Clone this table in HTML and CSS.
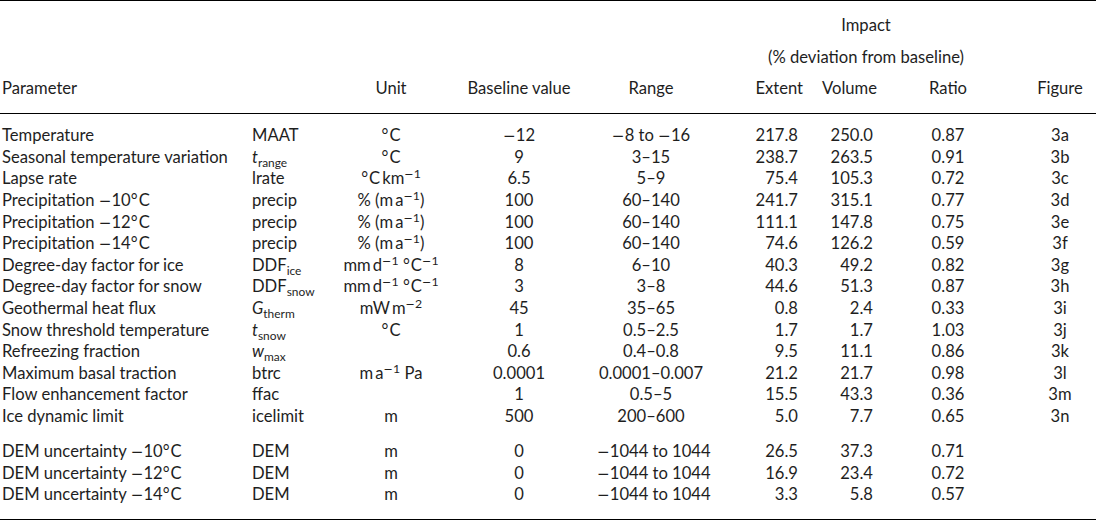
FILE: index.html
```html
<!DOCTYPE html>
<html lang="en">
<head>
<meta charset="utf-8">
<title>Parameter sensitivity</title>
<link rel="stylesheet" href="styles.css">
</head>
<body>
<div class="table">
  <div class="head">
    <div class="row hrow r1">
      <div class="span-impact">Impact</div>
    </div>
    <div class="row hrow r2">
      <div class="span-impact">(% deviation from baseline)</div>
    </div>
    <div class="row hrow r3">
      <div class="c-param">Parameter</div>
      <div class="c-sym"></div>
      <div class="c-unit">Unit</div>
      <div class="c-base">Baseline value</div>
      <div class="c-range">Range</div>
      <div class="c-ext h">Extent</div>
      <div class="c-vol h">Volume</div>
      <div class="c-ratio">Ratio</div>
      <div class="c-fig">Figure</div>
    </div>
  </div>
  <div class="body">
    <div class="group">
      <div class="row"><div class="c-param">Temperature</div><div class="c-sym">MAAT</div><div class="c-unit">°&#8202;C</div><div class="c-base"><span class="mn">−</span>12</div><div class="c-range"><span class="mn">−</span>8 to <span class="mn">−</span>16</div><div class="c-ext">217.8</div><div class="c-vol">250.0</div><div class="c-ratio">0.87</div><div class="c-fig">3a</div></div>
      <div class="row"><div class="c-param">Seasonal temperature variation</div><div class="c-sym"><i>t</i><sub>range</sub></div><div class="c-unit">°&#8202;C</div><div class="c-base">9</div><div class="c-range">3–15</div><div class="c-ext">238.7</div><div class="c-vol">263.5</div><div class="c-ratio">0.91</div><div class="c-fig">3b</div></div>
      <div class="row"><div class="c-param">Lapse rate</div><div class="c-sym">lrate</div><div class="c-unit">°&#8202;C&#8201;km<sup><span class="mn">−</span>1</sup></div><div class="c-base">6.5</div><div class="c-range">5–9</div><div class="c-ext">75.4</div><div class="c-vol">105.3</div><div class="c-ratio">0.72</div><div class="c-fig">3c</div></div>
      <div class="row"><div class="c-param">Precipitation <span class="mn">−</span>10°&#8202;C</div><div class="c-sym">precip</div><div class="c-unit">% (m&#8201;a<sup><span class="mn">−</span>1</sup>)</div><div class="c-base">100</div><div class="c-range">60–140</div><div class="c-ext">241.7</div><div class="c-vol">315.1</div><div class="c-ratio">0.77</div><div class="c-fig">3d</div></div>
      <div class="row"><div class="c-param">Precipitation <span class="mn">−</span>12°&#8202;C</div><div class="c-sym">precip</div><div class="c-unit">% (m&#8201;a<sup><span class="mn">−</span>1</sup>)</div><div class="c-base">100</div><div class="c-range">60–140</div><div class="c-ext">111.1</div><div class="c-vol">147.8</div><div class="c-ratio">0.75</div><div class="c-fig">3e</div></div>
      <div class="row"><div class="c-param">Precipitation <span class="mn">−</span>14°&#8202;C</div><div class="c-sym">precip</div><div class="c-unit">% (m&#8201;a<sup><span class="mn">−</span>1</sup>)</div><div class="c-base">100</div><div class="c-range">60–140</div><div class="c-ext">74.6</div><div class="c-vol">126.2</div><div class="c-ratio">0.59</div><div class="c-fig">3f</div></div>
      <div class="row"><div class="c-param">Degree-day factor for ice</div><div class="c-sym">DDF<sub>ice</sub></div><div class="c-unit">mm&#8201;d<sup><span class="mn">−</span>1</sup> °&#8202;C<sup><span class="mn">−</span>1</sup></div><div class="c-base">8</div><div class="c-range">6–10</div><div class="c-ext">40.3</div><div class="c-vol">49.2</div><div class="c-ratio">0.82</div><div class="c-fig">3g</div></div>
      <div class="row"><div class="c-param">Degree-day factor for snow</div><div class="c-sym">DDF<sub>snow</sub></div><div class="c-unit">mm&#8201;d<sup><span class="mn">−</span>1</sup> °&#8202;C<sup><span class="mn">−</span>1</sup></div><div class="c-base">3</div><div class="c-range">3–8</div><div class="c-ext">44.6</div><div class="c-vol">51.3</div><div class="c-ratio">0.87</div><div class="c-fig">3h</div></div>
      <div class="row"><div class="c-param">Geothermal heat flux</div><div class="c-sym"><i>G</i><sub>therm</sub></div><div class="c-unit">mW&#8201;m<sup><span class="mn">−</span>2</sup></div><div class="c-base">45</div><div class="c-range">35–65</div><div class="c-ext">0.8</div><div class="c-vol">2.4</div><div class="c-ratio">0.33</div><div class="c-fig">3i</div></div>
      <div class="row"><div class="c-param">Snow threshold temperature</div><div class="c-sym"><i>t</i><sub>snow</sub></div><div class="c-unit">°&#8202;C</div><div class="c-base">1</div><div class="c-range">0.5–2.5</div><div class="c-ext">1.7</div><div class="c-vol">1.7</div><div class="c-ratio">1.03</div><div class="c-fig">3j</div></div>
      <div class="row"><div class="c-param">Refreezing fraction</div><div class="c-sym"><i>w</i><sub>max</sub></div><div class="c-unit"></div><div class="c-base">0.6</div><div class="c-range">0.4–0.8</div><div class="c-ext">9.5</div><div class="c-vol">11.1</div><div class="c-ratio">0.86</div><div class="c-fig">3k</div></div>
      <div class="row"><div class="c-param">Maximum basal traction</div><div class="c-sym">btrc</div><div class="c-unit">m&#8201;a<sup><span class="mn">−</span>1</sup> Pa</div><div class="c-base">0.0001</div><div class="c-range">0.0001–0.007</div><div class="c-ext">21.2</div><div class="c-vol">21.7</div><div class="c-ratio">0.98</div><div class="c-fig">3l</div></div>
      <div class="row"><div class="c-param">Flow enhancement factor</div><div class="c-sym">ffac</div><div class="c-unit"></div><div class="c-base">1</div><div class="c-range">0.5–5</div><div class="c-ext">15.5</div><div class="c-vol">43.3</div><div class="c-ratio">0.36</div><div class="c-fig">3m</div></div>
      <div class="row"><div class="c-param">Ice dynamic limit</div><div class="c-sym">icelimit</div><div class="c-unit">m</div><div class="c-base">500</div><div class="c-range">200–600</div><div class="c-ext">5.0</div><div class="c-vol">7.7</div><div class="c-ratio">0.65</div><div class="c-fig">3n</div></div>
    </div>
    <div class="group dem">
      <div class="row"><div class="c-param">DEM uncertainty <span class="mn">−</span>10°&#8202;C</div><div class="c-sym">DEM</div><div class="c-unit">m</div><div class="c-base">0</div><div class="c-range"><span class="mn">−</span>1044 to 1044</div><div class="c-ext">26.5</div><div class="c-vol">37.3</div><div class="c-ratio">0.71</div><div class="c-fig"></div></div>
      <div class="row"><div class="c-param">DEM uncertainty <span class="mn">−</span>12°&#8202;C</div><div class="c-sym">DEM</div><div class="c-unit">m</div><div class="c-base">0</div><div class="c-range"><span class="mn">−</span>1044 to 1044</div><div class="c-ext">16.9</div><div class="c-vol">23.4</div><div class="c-ratio">0.72</div><div class="c-fig"></div></div>
      <div class="row"><div class="c-param">DEM uncertainty <span class="mn">−</span>14°&#8202;C</div><div class="c-sym">DEM</div><div class="c-unit">m</div><div class="c-base">0</div><div class="c-range"><span class="mn">−</span>1044 to 1044</div><div class="c-ext">3.3</div><div class="c-vol">5.8</div><div class="c-ratio">0.57</div><div class="c-fig"></div></div>
    </div>
  </div>
</div>
</body>
</html>
```

FILE: styles.css
```css
html, body {
  margin: 0;
  padding: 0;
  background: #ffffff;
}

body {
  font-family: Lato, "Liberation Sans", sans-serif;
  font-size: 16.6px;
  color: #1e1e1e;
}

.table {
  width: 1096px;
  border-top: 1px solid #000;
  border-bottom: 1px solid #000;
}

.row {
  display: grid;
  grid-template-columns: 251px 90px 100px 156px 108px 98px 93px 128px 72px;
  height: 21.6px;
  line-height: 21.6px;
  white-space: nowrap;
}

.head {
  padding-top: 7px;
  padding-bottom: 8px;
  border-bottom: 1px solid #000;
}

.hrow.r1 { height: 34px; line-height: 34px; }
.hrow.r2 { height: 30px; line-height: 30px; }
.hrow.r3 { height: 33px; line-height: 33px; }

.span-impact {
  grid-column: 6 / 9;
  text-align: center;
  padding-left: 3px;
}

.body {
  padding-top: 11.3px;
  padding-bottom: 13px;
}

.group.dem {
  margin-top: 13.4px;
}

.c-param { padding-left: 2px; }
.c-sym { padding-left: 1px; }
.c-unit { text-align: center; }
.c-base { text-align: center; }
.c-range { text-align: center; }
.c-ext { text-align: right; padding-right: 5px; }
.c-ext.h { padding-right: 0; }
.c-vol { text-align: right; padding-right: 23px; }
.c-vol.h { text-align: center; padding-right: 0; }
.c-ratio { text-align: center; padding-right: 24px; }
.c-fig { text-align: center; }

.mn {
  font-family: "DejaVu Sans", sans-serif;
  font-size: 0.92em;
  line-height: 0;
}

sub {
  font-size: 0.72em;
  vertical-align: -0.32em;
  line-height: 0;
}

sup {
  font-size: 0.74em;
  vertical-align: 0.5em;
  line-height: 0;
}

i {
  font-style: italic;
}
```
